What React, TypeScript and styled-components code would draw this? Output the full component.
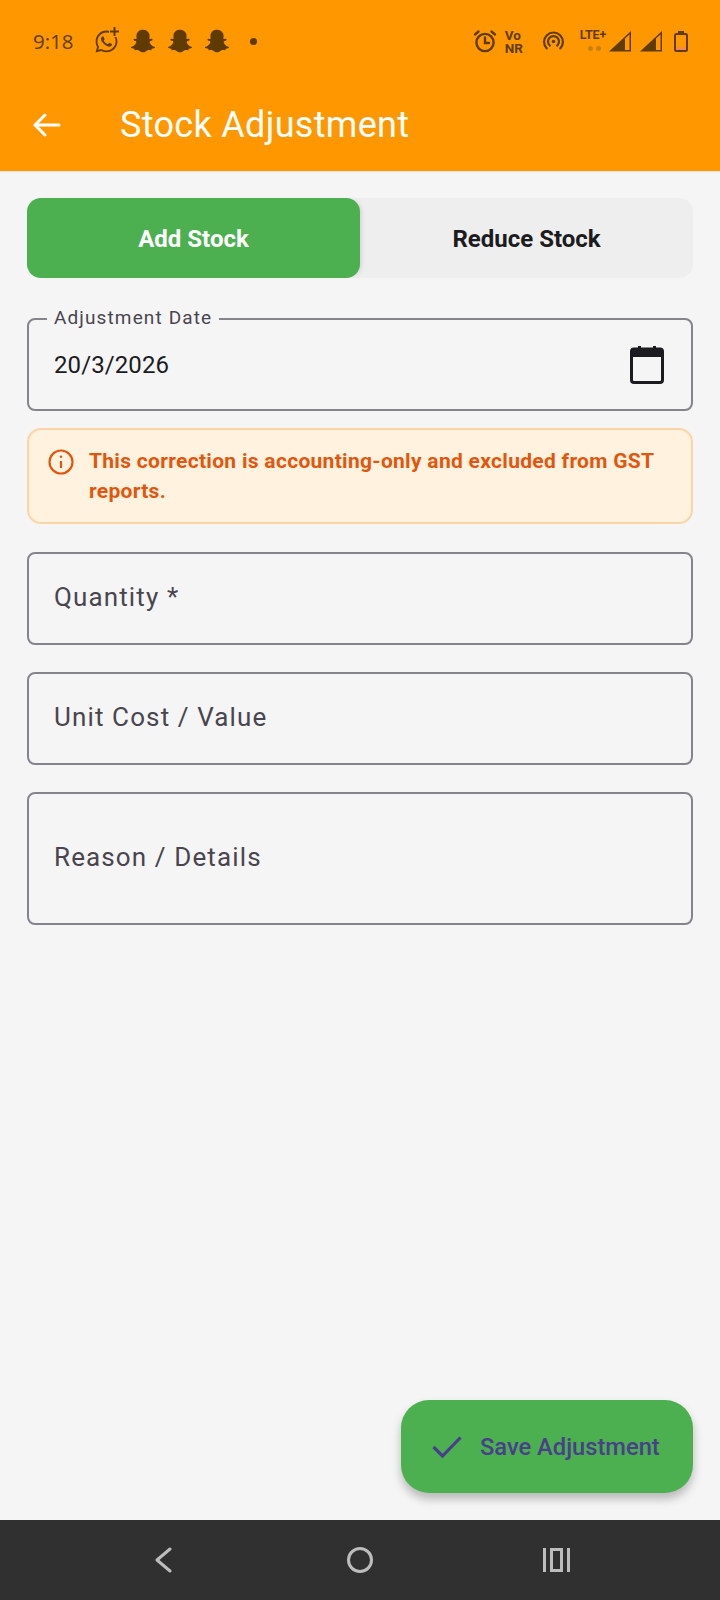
import React from "react";
import styled, { createGlobalStyle } from "styled-components";
import { FaSnapchatGhost, FaWhatsapp } from "react-icons/fa";

const GlobalStyle = createGlobalStyle`
  html, body {
    margin: 0;
    padding: 0;
    background: #f5f5f5;
    font-family: Roboto, "Liberation Sans", sans-serif;
  }
  * {
    box-sizing: border-box;
  }
`;

const Page = styled.div`
  width: 720px;
  height: 1600px;
  display: flex;
  flex-direction: column;
  background: #f5f5f5;
`;

const Header = styled.header`
  height: 171px;
  flex: none;
  background: #ff9800;
  box-shadow: 0 1px 1px rgba(0, 0, 0, 0.08);
  display: flex;
  flex-direction: column;
`;

const StatusBar = styled.div`
  height: 82px;
  padding: 0 32px 0 33px;
  display: flex;
  align-items: center;
  justify-content: space-between;
  color: #5f3b00;
`;

const StatusGroup = styled.div`
  display: flex;
  align-items: center;
`;

const StatusSlot = styled.span<{ $left: number }>`
  display: flex;
  margin-left: ${(p) => p.$left}px;
`;

const Clock = styled.span`
  width: 61px;
  font-size: 20.5px;
  font-family: "Open Sans", Roboto, sans-serif;
`;

const AppIcon = styled.span`
  position: relative;
  width: 37px;
  height: 26px;
  display: flex;
  align-items: center;
`;

const PlusBadge = styled.span`
  position: absolute;
  top: -2px;
  left: 15px;
  width: 11px;
  height: 11px;
  background: #ff9800;
  display: flex;
`;

const Dot = styled.span`
  width: 7px;
  height: 7px;
  margin-left: 8px;
  border-radius: 50%;
  background: #5f3b00;
`;

const VoNr = styled.span`
  display: flex;
  flex-direction: column;
  align-items: flex-start;
  margin: 2px 0 0 8px;
  font-weight: 700;
  font-size: 13.5px;
  line-height: 13px;
`;

const Lte = styled.span`
  position: relative;
  display: flex;
  height: 26px;
  margin-left: 16px;
  font-weight: 700;
  font-size: 12.5px;
  line-height: 14px;
  letter-spacing: -0.2px;
`;

const SimDots = styled.span`
  position: absolute;
  left: 8px;
  top: 18px;
  display: flex;
  gap: 3px;
`;

const SimDot = styled.span`
  width: 5px;
  height: 5px;
  border-radius: 50%;
  background: #c9800e;
`;

const AppBar = styled.div`
  flex: 1;
  display: flex;
  align-items: center;
  padding: 0 0 4px 33px;
  color: #fff;
`;

const Title = styled.h1`
  margin: 0 0 0 59px;
  font-size: 36px;
  font-weight: 400;
  letter-spacing: 0.32px;
`;

const Main = styled.main`
  flex: 1;
  display: flex;
  flex-direction: column;
  padding: 27px;
`;

const Toggle = styled.div`
  height: 80px;
  flex: none;
  display: flex;
  background: #eeeeee;
  border-radius: 14px;
`;

const ToggleOption = styled.button<{ $active?: boolean }>`
  flex: 1;
  border: 0;
  padding: 2px 0 0;
  border-radius: 14px;
  font-family: inherit;
  font-size: 24px;
  font-weight: 700;
  color: ${(p) => (p.$active ? "#fff" : "#1c1c1e")};
  background: ${(p) => (p.$active ? "#4caf50" : "transparent")};
  box-shadow: ${(p) => (p.$active ? "4px 0 5px -3px rgba(0, 0, 0, 0.14)" : "none")};
`;

const Field = styled.div<{ $height: number; $top: number }>`
  position: relative;
  height: ${(p) => p.$height}px;
  margin-top: ${(p) => p.$top}px;
  flex: none;
  display: flex;
  align-items: center;
  justify-content: space-between;
  padding: 0 27px 0 25px;
  border: 2px solid #85838b;
  border-radius: 8px;
`;

const FloatingLabel = styled.span`
  position: absolute;
  top: -13px;
  left: 18px;
  padding: 0 7px;
  background: #f5f5f5;
  font-size: 19px;
  line-height: 22px;
  letter-spacing: 1.12px;
  color: #49454f;
`;

const FieldValue = styled.span`
  font-size: 24px;
  letter-spacing: 0.1px;
  color: #1c1b1f;
`;

const Placeholder = styled.span`
  margin-bottom: 3px;
  font-size: 26px;
  letter-spacing: 1.12px;
  color: #49454f;
`;

const Notice = styled.div`
  height: 96px;
  margin-top: 17px;
  flex: none;
  display: flex;
  gap: 15px;
  padding: 16px 19px;
  background: #fff3e0;
  border: 2px solid #ffd2a8;
  border-radius: 14px;
`;

const NoticeIcon = styled.svg`
  flex: none;
  margin-top: 3px;
`;

const NoticeText = styled.p`
  margin: 0;
  font-size: 21px;
  line-height: 30px;
  font-weight: 700;
  letter-spacing: 0.3px;
  color: #e2560e;
`;

const SaveButton = styled.button`
  margin-top: auto;
  align-self: flex-end;
  width: 292px;
  height: 93px;
  border: 0;
  padding: 0 0 0 31px;
  display: flex;
  align-items: center;
  gap: 18px;
  border-radius: 28px;
  background: #4caf50;
  box-shadow: 0 6px 10px rgba(0, 0, 0, 0.25);
  font-family: inherit;
  font-size: 23.7px;
  font-weight: 500;
  color: #493f8a;
`;

const NavBar = styled.nav`
  height: 80px;
  flex: none;
  background: #303030;
  display: flex;
  align-items: center;
  justify-content: space-between;
  padding: 0 150px 0 155px;
`;

const AlarmIcon = () => (
  <svg width="24" height="24" viewBox="0 0 24 24" fill="none" stroke="currentColor" strokeWidth="2.4" strokeLinecap="round">
    <circle cx="12" cy="13.5" r="8.6" />
    <path d="M12 8.5v5.5h4M2 5.5 5.5 2.5M22 5.5 18.5 2.5" />
  </svg>
);

const HotspotIcon = () => (
  <svg width="21" height="21" viewBox="0 0 23 22" fill="none" stroke="currentColor" strokeWidth="2.4" strokeLinecap="round">
    <circle cx="11.5" cy="11" r="2" fill="currentColor" stroke="none" />
    <path d="M7.5 15.5a6 6 0 1 1 8 0M4 18.5a10.3 10.3 0 1 1 15 0" />
  </svg>
);

const SignalIcon = () => (
  <svg width="23" height="21" viewBox="0 0 23 21">
    <path d="M0 20.5 22 0v20.5z" fill="#5f3b00" />
    <path d="M16 7.5 20.5 3.5V19H16z" fill="#ff9800" />
  </svg>
);

const BatteryIcon = () => (
  <svg width="14" height="21" viewBox="0 0 14 21" fill="none">
    <path d="M4 1h6" stroke="#5f3b00" strokeWidth="2" />
    <rect x="1" y="3" width="12" height="17" rx="1.5" stroke="#5f3b00" strokeWidth="2" />
    <rect x="2" y="16.5" width="10" height="2.5" fill="#f0845a" />
  </svg>
);

const ArrowIcon = () => (
  <svg width="28" height="24" viewBox="0 0 28 24" fill="none" stroke="#fff" strokeWidth="3" strokeLinecap="round" strokeLinejoin="round">
    <path d="M26 12H2M12 2 2 12l10 10" />
  </svg>
);

const CalendarIcon = () => (
  <svg width="34" height="38" viewBox="0 0 34 38" fill="none">
    <path d="M8 0h3v4H8zM23 0h3v4h-3z" fill="#1c1b1f" />
    <rect x="1.5" y="3" width="31" height="33.5" rx="2.5" stroke="#1c1b1f" strokeWidth="3" />
    <rect x="1.5" y="3" width="31" height="8" fill="#1c1b1f" />
  </svg>
);

const InfoIcon = () => (
  <NoticeIcon width="26" height="26" viewBox="0 0 26 26" fill="none" stroke="#e2560e" strokeWidth="2.2">
    <circle cx="13" cy="13" r="11.5" />
    <path d="M13 12v7" />
    <circle cx="13" cy="7.8" r="1.3" fill="#e2560e" stroke="none" />
  </NoticeIcon>
);

const CheckIcon = () => (
  <svg width="30" height="22" viewBox="0 0 30 22" fill="none" stroke="#493f8a" strokeWidth="3.2">
    <path d="M1.5 11 10.5 20 28.5 1.5" />
  </svg>
);

const BackIcon = () => (
  <svg width="21" height="26" viewBox="0 0 21 26" fill="none" stroke="#bdbdbd" strokeWidth="3" strokeLinecap="round" strokeLinejoin="round">
    <path d="M15 2 2 13l13 11" />
  </svg>
);

const HomeIcon = () => (
  <svg width="26" height="26" viewBox="0 0 26 26" fill="none" stroke="#bdbdbd" strokeWidth="3">
    <circle cx="13" cy="13" r="11.5" />
  </svg>
);

const RecentsIcon = () => (
  <svg width="27" height="24" viewBox="0 0 27 24" fill="none" stroke="#bdbdbd" strokeWidth="3">
    <path d="M1.5 0v24M25.5 0v24" />
    <rect x="8.5" y="1.5" width="10" height="21" />
  </svg>
);

const App: React.FC = () => {
  return (
    <Page>
      <GlobalStyle />
      <Header>
        <StatusBar>
          <StatusGroup>
            <Clock>9:18</Clock>
            <AppIcon>
              <FaWhatsapp size={25} />
              <PlusBadge>
                <svg width="11" height="11" viewBox="0 0 11 11" stroke="#5f3b00" strokeWidth="2">
                  <path d="M5.5 1v9M1 5.5h9" />
                </svg>
              </PlusBadge>
            </AppIcon>
            <AppIcon>
              <FaSnapchatGhost size={24} />
            </AppIcon>
            <AppIcon>
              <FaSnapchatGhost size={24} />
            </AppIcon>
            <AppIcon>
              <FaSnapchatGhost size={24} />
            </AppIcon>
            <Dot />
          </StatusGroup>
          <StatusGroup>
            <AlarmIcon />
            <VoNr>
              <span>Vo</span>
              <span>NR</span>
            </VoNr>
            <StatusSlot $left={20}>
              <HotspotIcon />
            </StatusSlot>
            <Lte>
              LTE+
              <SimDots>
                <SimDot />
                <SimDot />
              </SimDots>
            </Lte>
            <StatusSlot $left={3}>
              <SignalIcon />
            </StatusSlot>
            <StatusSlot $left={8}>
              <SignalIcon />
            </StatusSlot>
            <StatusSlot $left={11}>
              <BatteryIcon />
            </StatusSlot>
          </StatusGroup>
        </StatusBar>
        <AppBar>
          <ArrowIcon />
          <Title>Stock Adjustment</Title>
        </AppBar>
      </Header>
      <Main>
        <Toggle>
          <ToggleOption $active>Add Stock</ToggleOption>
          <ToggleOption>Reduce Stock</ToggleOption>
        </Toggle>
        <Field $height={93} $top={40}>
          <FloatingLabel>Adjustment Date</FloatingLabel>
          <FieldValue>20/3/2026</FieldValue>
          <CalendarIcon />
        </Field>
        <Notice>
          <InfoIcon />
          <NoticeText>This correction is accounting-only and excluded from GST reports.</NoticeText>
        </Notice>
        <Field $height={93} $top={28}>
          <Placeholder>Quantity *</Placeholder>
        </Field>
        <Field $height={93} $top={27}>
          <Placeholder>Unit Cost / Value</Placeholder>
        </Field>
        <Field $height={133} $top={27}>
          <Placeholder>Reason / Details</Placeholder>
        </Field>
        <SaveButton>
          <CheckIcon />
          Save Adjustment
        </SaveButton>
      </Main>
      <NavBar>
        <BackIcon />
        <HomeIcon />
        <RecentsIcon />
      </NavBar>
    </Page>
  );
};

export default App;
